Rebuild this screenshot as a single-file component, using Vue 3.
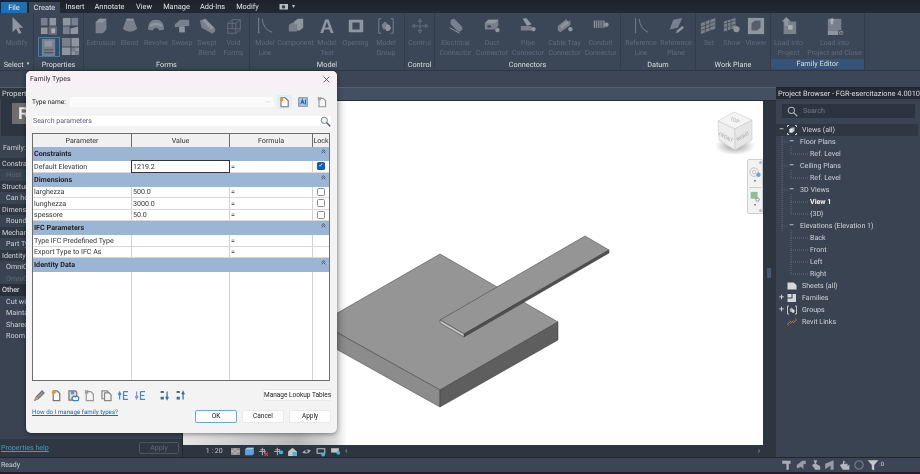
<script setup>
import { h } from 'vue'

const G = '#78808d', L = '#8e96a2', D = '#636b78', S = '#aab0b9'
const icons = {
  modify: [['M5 0L5 17L9 13L12 19L15 17.5L12 12L17 12Z', L]],
  extrusion: [['M4 6L8 2H16V14L12 18H4Z', G], ['M4 6L8 2H16L12 6Z', L]],
  blend: [['M6 2H14L18 13Q10 20 2 13Z', G], ['M6 2H14L13 4H7Z', L]],
  revolve: [['M1 14Q1 3 10 3Q19 3 19 14L14 15Q10 9 6 15Z', G], ['M3 9Q10 4 17 9L16 11Q10 7 4 11Z', L]],
  sweep: [['M2 8L8 3H18V10L13 10V17H7V11H2Z', G], ['M7 11H13V17H7Z', L]],
  swept: [['M2 4L8 2L18 12A3 3 0 1 1 13 17L4 12Z', G], ['M8 2L18 12L14 14L5 4Z', L]],
  void: [['M3 7L8 3H17V14L12 18H3ZM3 7H12V18M12 7L17 3M8 3V13H3M8 13H17', 'none', D]],
  mline: [['M3 1V18M7 2Q8 14 18 17', 'none', G], ['M2 2h2M2 17h2', 'none', G]],
  component: [['M2 9L6 6H11V16H2Z', G], ['M8 5L12 2H18V12L14 15H11V8H8Z', L]],
  mtext: [['T', 'A']],
  opening: [['M2 3H18V17H2ZM6 6V14H14V6Z', L]],
  mgroup: [['M5 2H2V18H5M15 2H18V18H15', 'none', G], ['M5 9L9 5L12 8V14H7Z', G], ['M10 9A3.5 3.5 0 1 1 10 15Z', L]],
  control: [['M10 4V16M3 10H17M10 2L8 5H12ZM10 18L8 15H12ZM1 10L4 8V12ZM19 10L16 8V12Z', 'none', D]],
  elec: [['M4 3L8 2L16 10A3 3 0 0 1 11 15L4 8Z', G], ['M3 12L14 18', 'none', L]],
  duct: [['M2 7L6 3H17V10L13 14H2Z', G], ['M2 7H13L17 3H6Z', L], ['M5 9H9V12H5Z', '#4a5260'], ['M16 12a2.5 2.5 0 1 0 .01 0', L]],
  pipe: [['M4 2L8 1L14 8L9 10Z', L], ['M2 10H14V15H2Z', G], ['M16 11a2.5 2.5 0 1 0 .01 0', L]],
  tray: [['M2 10L12 2V6L16 3V9L5 17L2 15Z', G], ['M5 10L13 4L14 7L6 13Z', L], ['M16 11a2.5 2.5 0 1 0 .01 0', L]],
  conduit: [['M2 4H14V12H2Z', L], ['M4 4V12M6 4V12M8 4V12M10 4V12M12 4V12', 'none', '#4a5260'], ['M16 6a2.5 2.5 0 1 0 .01 0', L]],
  rline: [['M4 1V18', 'none', G], ['M8 2Q9 13 18 17', 'none', G]],
  rplane: [['M7 3L17 1L12 12L3 14Z', G], ['M11 15L17 10L19 12L13 17L10 18Z', L]],
  wset: [['M1 7L17 1V13L1 19Z', G], ['M6 5V17M11 3V15M1 11L17 5M1 15L17 9', 'none', '#4a5260']],
  show: [['M1 5L14 1V12L1 16Z', G], ['M5 4V15M9 3V14M1 8L14 4M1 12L14 8', 'none', '#4a5260'], ['M15 10a3.5 3.5 0 1 0 .01 0', L]],
  viewer: [['M1 1H19V19H1Z', L], ['M5 7L9 4H15V12L11 15H5Z', '#575f6c']],
  load: [['M4 5H18V19H4Z', G], ['M9 9H14V14H9Z', S], ['M7 0L12 5H9V10H5V5H2Z', L]],
  loadc: [['M2 2H17V15H2Z', G], ['M2 15H19V20H2Z', L], ['M7 1L10 4H8V8H5V4H3Z', S], ['M14 15H20V20H14ZM15 16L19 19M19 16L15 19', 'none', '#4a5260']],
  p1: [['M2 1H9V9H2Z', G], ['M11 1H18V9H11Z', L], ['M2 11H9V18H2Z', L], ['M10 10H19V19H10Z', D], ['M13 12H17V17H13Z', S]],
  p2: [['M2 1H10V9H2Z', L], ['M11 1H18V9H11Z', G], ['M2 10H9V18H2Z', G], ['M10 12L18 10V18H10Z', L]],
  p3: [['M3 1H17V19H3Z', G], ['M6 3H14V9H6Z', L], ['M5 12H15V13H5ZM5 15H15V16H5Z', '#3f4755']],
  p4: [['M1 1H10V10H1Z', G], ['M11 1H19V10H11Z', L], ['M1 11H10V19H1Z', L], ['M11 11H15V15H11ZM15 15H19V19H15Z', G], ['M15 11H19V15H15ZM11 15H15V19H11Z', L]],
  dNew: [['M5 3H12L17 8V18H5Z', '#fff', '#777'], ['M6 3a3 3 0 1 0 .01 0', '#f0922d']],
  dRen: [['M3 3H17V17H3Z', '#bcd3ea', '#6d8eb0'], ['M6 14L9 6L12 14M8 11H11M14 6V14', 'none', '#2c6aa5']],
  dDel: [['M5 4H12L16 8V18H5Z', '#f4f4f4', '#999'], ['M3 2L8 7M8 2L3 7', 'none', '#999']],
  pencil: [['M3 17L5 12L14 3L17 6L8 15Z', '#9a9a9a', '#777'], ['M3 17L5 12L8 15Z', '#d6a85e']],
  dDoc: [['M5 3H11L15 7V18H5Z', '#fff', '#777'], ['M6 2a3 3 0 1 0 .01 0', '#f0922d']],
  dCloud: [['M3 3H13L15 5V17H3Z', '#ddd', '#777'], ['M6 3H11V8H6Z', '#6d8eb0'], ['M9 17A3 3 0 0 1 13 12A3 3 0 0 1 18 15Q18 18 16 18H10Z', '#fff', '#3c7fc2']],
  dCopy: [['M3 3H11L14 6V15H3Z', '#f3f3f3', '#888'], ['M7 6H14L17 9V18H7Z', '#f3f3f3', '#888']],
  up: [['M4 16V7M2 9L4 5L6 9', 'none', '#4a8ac4'], ['M10 4V16H17M10 4H17M10 10H16', 'none', '#4a8ac4']],
  down: [['M4 4V13M2 11L4 15L6 11', 'none', '#8a94cf'], ['M10 4V16H17M10 4H17M10 10H16', 'none', '#4a8ac4']],
  az: [['M4 3H9V6H4ZM4 12H9V16H4Z', '#3d6f9d'], ['M14 4V15M12 12L14 16L16 12', 'none', '#3d6f9d']],
  za: [['M4 3H9V6H4ZM4 12H9V16H4Z', '#3d6f9d'], ['M14 16V5M12 8L14 4L16 8', 'none', '#3d6f9d']],
  vDetail: [['M2 4H18V16H2Z', '#b5b5b5'], ['M2 4H7V8H2ZM12 4H18V8H12ZM7 8H12V12H7ZM2 12H7V16H2ZM12 12H18V16H12Z', '#8c8c8c']],
  vStyle: [['M2 6L6 3H18V14L15 17H2Z', '#5da3dc'], ['M2 6H15L18 3H6Z', '#a9d1ef']],
  vSun: [['M2 10H14M8 3V17M4 7H12V14', 'none', '#a6acb5'], ['M12 12L18 18M18 12L12 18', 'none', '#e04444']],
  vShadow: [['M2 10H14M8 3V17M4 7H12V14', 'none', '#a6acb5'], ['M15 8a3.5 3.5 0 1 0 .01 0', '#39bcd0']],
  vHouse: [['M2 10L10 3L18 10V18H2Z', '#c0c5cb'], ['M10 11H18V18H10Z', '#39bcd0']],
  vEye: [['M2 12Q10 3 18 8Q12 17 2 12Z', '#a6acb5'], ['M10 7a2.5 2.5 0 1 0 .01 0', '#3c4453']],
  vCrop: [['M2 5H16V13H2Z', 'none', '#c0c5cb'], ['M13 12a3.5 3.5 0 1 0 .01 0', '#39bcd0']],
  vCrop2: [['M2 4H16V12H2Z', '#c0c5cb'], ['M15 9a3.5 3.5 0 1 0 .01 0', '#39bcd0']],
  s1: [['M2 3H16V8H13V18H9V8H2Z', '#a9afb8']],
  s2: [['M3 10L12 3H18V8L14 9V17L10 13L3 16Z', '#969da8']],
  s3: [['M6 2H12L10 8L17 12V18H9L3 10L8 8Z', '#a9afb8']],
  s4: [['M2 8L16 2V18H11V11L2 17Z', '#969da8']],
  s5: [['M9 2L13 6H10V8H16V12L19 9V18H8L3 10L8 8Z', '#b2b8c0']],
  s6: [['M10 3a7 7 0 1 0 .01 0', 'none', '#737b88']],
  filter: [['M1 2H19L12 10V19L8 17V10Z', '#c4c9cf']],
  tViews: [['M1 1V4M1 1H4M19 1V4M19 1H16M1 19V16M1 19H4M19 19V16M19 19H16', 'none', '#d4d8dd'], ['M5 8L9 5H15V12L11 15H5Z', '#b9bfc7'], ['M5 8H11V15H5Z', '#e6e8eb']],
  tSheets: [['M1 3H13L19 8V17H1Z', '#d4d8dd']],
  tFam: [['M1 2H9V9H1ZM11 2H18V18H1V11H11Z', '#d4d8dd']],
  tGroups: [['M4 2H1V18H4M16 2H19V18H16', 'none', '#c8ccd2'], ['M5 9L9 5L12 8V14H7Z', '#aeb4bd'], ['M10 9A3.5 3.5 0 1 1 10 15Z', '#d4d8dd']],
  tLinks: [['M3 17A3 3 0 0 1 3 12L8 8M17 3A3 3 0 0 1 17 8L12 12M7 13L13 7', 'none', '#c0824a']],
  cam: [['M1 4H18V15H1Z', '#b9bfc7'], ['M9 6a3.5 3.5 0 1 0 .01 0', '#3b4453']]
}

// Functional helper so every small icon is drawn from the table above
const Ic = (props) =>
  h('svg', { viewBox: '0 0 20 20', width: props.size, height: props.size, style: { flex: 'none', display: 'block' } },
    icons[props.name].map((s) =>
      s[0] === 'T'
        ? h('text', { x: 10, y: 17.5, 'text-anchor': 'middle', 'font-size': 22, 'font-weight': 700, 'font-family': 'Liberation Sans, sans-serif', fill: L }, s[1])
        : h('path', { d: s[0], fill: s[1], stroke: s[2] || 'none', 'stroke-width': s[2] ? (props.size > 14 ? 1.1 : 1.9) : 0 })
    ))
Ic.props = ['name', 'size']

const tabs = [
  { t: 'Create', w: 31 }, { t: 'Insert', w: 30 }, { t: 'Annotate', w: 39 }, { t: 'View', w: 30 },
  { t: 'Manage', w: 35 }, { t: 'Add-Ins', w: 37 }, { t: 'Modify', w: 33 }
]

const panels = [
  { label: 'Select', w: 34, menu: true, tools: [{ lines: ['Modify'], icon: 'modify', w: 34 }] },
  { label: 'Properties', w: 50, grid: true, tools: [] },
  { label: 'Forms', w: 166, tools: [
    { lines: ['Extrusion'], icon: 'extrusion', w: 31 }, { lines: ['Blend'], icon: 'blend', w: 26 },
    { lines: ['Revolve'], icon: 'revolve', w: 27 }, { lines: ['Sweep'], icon: 'sweep', w: 25 },
    { lines: ['Swept', 'Blend'], icon: 'swept', w: 25 }, { lines: ['Void', 'Forms'], icon: 'void', w: 28 }] },
  { label: 'Model', w: 155, tools: [
    { lines: ['Model', 'Line'], icon: 'mline', w: 28 }, { lines: ['Component'], icon: 'component', w: 33 },
    { lines: ['Model', 'Text'], icon: 'mtext', w: 30 }, { lines: ['Opening'], icon: 'opening', w: 27 },
    { lines: ['Model', 'Group'], icon: 'mgroup', w: 34 }] },
  { label: 'Control', w: 30, tools: [{ lines: ['Control'], icon: 'control', w: 28 }] },
  { label: 'Connectors', w: 186, tools: [
    { lines: ['Electrical', 'Connector'], icon: 'elec', w: 38 }, { lines: ['Duct', 'Connector'], icon: 'duct', w: 35 },
    { lines: ['Pipe', 'Connector'], icon: 'pipe', w: 37 }, { lines: ['Cable Tray', 'Connector'], icon: 'tray', w: 36 },
    { lines: ['Conduit', 'Connector'], icon: 'conduit', w: 36 }] },
  { label: 'Datum', w: 75, tools: [
    { lines: ['Reference', 'Line'], icon: 'rline', w: 36 }, { lines: ['Reference', 'Plane'], icon: 'rplane', w: 34 }] },
  { label: 'Work Plane', w: 75, tools: [
    { lines: ['Set'], icon: 'wset', w: 22 }, { lines: ['Show'], icon: 'show', w: 24 }, { lines: ['Viewer'], icon: 'viewer', w: 24 }] },
  { label: 'Family Editor', w: 94, active: true, tools: [
    { lines: ['Load into', 'Project'], icon: 'load', w: 34 }, { lines: ['Load into', 'Project and Close'], icon: 'loadc', w: 58 }] }
]

const propRows = [
  { t: 'Constraints', h: 1 }, { t: 'Host', off: 1 }, { t: 'Structural', h: 1 }, { t: 'Can host rebar' },
  { t: 'Dimensions', h: 1 }, { t: 'Round Connector' }, { t: 'Mechanical', h: 1 }, { t: 'Part Type' },
  { t: 'Identity Data', h: 1 }, { t: 'OmniClass' }, { t: 'OmniClass', off: 1 }, { t: 'Other', h: 1, hot: 1 },
  { t: 'Cut with' }, { t: 'Maintain' }, { t: 'Shared' }, { t: 'Room' }
]

const tree = [
  { t: 'Views (all)', lv: 0, exp: '−', icon: 'tViews', sel: 1 }, { t: 'Floor Plans', lv: 1, exp: '−' }, { t: 'Ref. Level', lv: 2 },
  { t: 'Ceiling Plans', lv: 1, exp: '−' }, { t: 'Ref. Level', lv: 2 }, { t: '3D Views', lv: 1, exp: '−' },
  { t: 'View 1', lv: 2, bold: 1 }, { t: '{3D}', lv: 2 }, { t: 'Elevations (Elevation 1)', lv: 1, exp: '−' },
  { t: 'Back', lv: 2 }, { t: 'Front', lv: 2 }, { t: 'Left', lv: 2 }, { t: 'Right', lv: 2 },
  { t: 'Sheets (all)', lv: 0, icon: 'tSheets' }, { t: 'Families', lv: 0, exp: '+', icon: 'tFam' },
  { t: 'Groups', lv: 0, exp: '+', icon: 'tGroups' }, { t: 'Revit Links', lv: 0, icon: 'tLinks' }
]

const paramGroups = [
  { name: 'Constraints', rows: [{ p: 'Default Elevation', v: '1219.2', f: '=', lock: 'on', focus: 1 }] },
  { name: 'Dimensions', rows: [
    { p: 'larghezza', v: '500.0', f: '=', lock: 'off' }, { p: 'lunghezza', v: '3000.0', f: '=', lock: 'off' },
    { p: 'spessore', v: '50.0', f: '=', lock: 'off' }] },
  { name: 'IFC Parameters', rows: [
    { p: 'Type IFC Predefined Type', v: '', f: '=' }, { p: 'Export Type to IFC As', v: '', f: '=' }] },
  { name: 'Identity Data', rows: [] }
]

const viewIcons = ['vDetail', 'vStyle', 'vSun', 'vShadow', 'vHouse', 'vEye', 'vCrop', 'vCrop2']
const statusIcons = ['s1', 's2', 's3', 's4', 's5', 's6']
const dlgTools = ['pencil', 'dDoc', 'dCloud', 'dDel', 'dCopy', 'up', 'down', 'az', 'za']
</script>

<template>
  <div class="app">
    <div class="tabs">
      <span class="file">File</span>
      <span v-for="(t, i) in tabs" :key="t.t" class="tab" :class="{ on: i === 0 }" :style="{ width: t.w + 'px' }">{{ t.t }}</span>
      <span class="cam"><Ic name="cam" :size="10" /><i>▾</i></span>
    </div>

    <div class="ribbon">
      <section v-for="p in panels" :key="p.label" class="panel" :style="{ width: p.w + 'px' }">
        <div class="tools">
          <div v-if="p.grid" class="pgrid">
            <Ic name="p1" :size="19" /><Ic name="p2" :size="19" />
            <span class="psel"><Ic name="p3" :size="19" /></span><Ic name="p4" :size="19" />
          </div>
          <div v-for="t in p.tools" :key="t.lines.join()" class="tool" :style="{ width: t.w + 'px' }">
            <Ic :name="t.icon" :size="18" />
            <span v-for="l in t.lines" :key="l" class="tl">{{ l }}</span>
          </div>
        </div>
        <div class="plabel" :class="{ active: p.active }">{{ p.label }}<i v-if="p.menu">▾</i></div>
      </section>
    </div>
    <div class="band"></div>

    <div class="main">
      <aside class="props">
        <div class="ptitle">Properties</div>
        <div class="thumb"><span class="logo">R</span></div>
        <div class="famrow">Family:</div>
        <div class="plist">
          <div v-for="(r, i) in propRows" :key="i" class="prow" :class="{ head: r.h, off: r.off, hot: r.hot }">{{ r.t }}</div>
        </div>
        <div class="pfoot"><a class="phelp">Properties help</a><span class="papply">Apply</span></div>
      </aside>

      <div class="center">
        <div class="vtop"></div>
        <div class="vmid">
          <div class="viewport">
            <svg class="scene" viewBox="183 101 580 344" width="580" height="344">
              <defs>
                <linearGradient id="shade" x1="183" x2="347" y1="0" y2="0" gradientUnits="userSpaceOnUse">
                  <stop offset="0" stop-color="#000" stop-opacity=".1" />
                  <stop offset=".7" stop-color="#000" stop-opacity=".28" />
                  <stop offset=".93" stop-color="#000" stop-opacity=".14" />
                  <stop offset="1" stop-color="#000" stop-opacity="0" />
                </linearGradient>
                <radialGradient id="cubeShadow">
                  <stop offset="0" stop-color="#999" />
                  <stop offset="1" stop-color="#fff" />
                </radialGradient>
              </defs>
              <g stroke="#3a3a3a" stroke-width=".5" stroke-linejoin="round">
                <polygon points="320,323 440,254 558,322 440,390" fill="#959595" />
                <polygon points="320,323 440,390 440,407 320,340" fill="#8c8c8c" />
                <polygon points="440,390 558,322 558,340 440,407" fill="#5e5e5e" />
                <polygon points="440,320 585,236 609,250 464,334" fill="#959595" />
                <polygon points="464,334 609,250 609,253 464,337" fill="#4f4f4f" />
                <polygon points="440,320 464,334 464,337 440,323" fill="#c4c4c4" />
              </g>
              <rect x="183" y="101" width="165" height="344" fill="url(#shade)" />
              <ellipse cx="735" cy="146" rx="20" ry="9" fill="url(#cubeShadow)" />
              <g stroke="#c9c9c9" stroke-width=".6">
                <polygon points="734,112 752,120 735,129 718,121" fill="#f4f4f4" />
                <polygon points="718,121 735,129 735,150 719,140" fill="#eeeeee" />
                <polygon points="752,120 735,129 735,150 752,140" fill="#e6e6e6" />
              </g>
              <g class="cubetxt">
                <text x="735" y="122" transform="rotate(22 735 120)">TOP</text>
                <text x="726" y="139" transform="rotate(28 726 137)">FRONT</text>
                <text x="743" y="138" transform="rotate(-30 743 136)">RIGHT</text>
              </g>
            </svg>
            <div class="navbar">
              <i class="nx"></i>
              <svg viewBox="0 0 16 14" width="14" height="12"><circle cx="7" cy="6" r="5" fill="none" stroke="#bbb" /><circle cx="7" cy="6" r="2" fill="none" stroke="#bbb" /><circle cx="12" cy="9" r="2.6" fill="#6aa5dc" /></svg>
              <b>▾</b><hr />
              <svg viewBox="0 0 16 14" width="14" height="12"><rect x="3" y="1" width="8" height="8" fill="#8fc08f" /><circle cx="11" cy="10" r="2" fill="none" stroke="#888" /></svg>
              <b>▾</b>
              <i class="nx"></i>
            </div>
          </div>
          <div class="vscroll"><i></i></div>
        </div>
        <div class="vbar">
          <span class="scale">1 : 20</span>
          <span class="vicons"><Ic v-for="n in viewIcons" :key="n" :name="n" :size="11" /></span>
          <span class="chev">‹</span>
          <span class="hs"></span>
          <span class="chev">›</span>
          <i class="vgrip"></i>
        </div>
      </div>

      <aside class="browser">
        <div class="btitle">Project Browser - FGR-esercitazione 4.0010</div>
        <div class="bsearch">
          <svg viewBox="0 0 14 14" width="11" height="11"><circle cx="5.5" cy="5.5" r="4" fill="none" stroke="#aeb4bd" stroke-width="1.3" /><path d="M8.5 8.5L13 13" stroke="#aeb4bd" stroke-width="1.5" /></svg>
          <span>Search</span>
        </div>
        <div class="tree">
          <svg class="tlines" width="40" height="290" viewBox="0 0 40 290">
            <path d="M6 10V108M6 18H12M6 42H12M6 66H12M6 102H12M15 22V30H32M15 46V54H32M15 70V90H32M15 78H32M15 106V150H32M15 114H32M15 126H32M15 138H32" fill="none" stroke="#616b79" stroke-dasharray="1 1" />
          </svg>
          <div v-for="(r, i) in tree" :key="i" class="trow" :class="['lv' + r.lv, { sel: r.sel, bold: r.bold }]">
            <span v-if="r.lv < 2" class="exp">{{ r.exp }}</span>
            <span v-if="r.icon" class="ticon"><Ic :name="r.icon" :size="10" /></span>
            <span class="ttext">{{ r.t }}</span>
          </div>
        </div>
      </aside>
    </div>

    <footer class="status">
      <span class="ready">Ready</span>
      <span class="sicons">
        <Ic v-for="n in statusIcons" :key="n" :name="n" :size="12" />
        <Ic name="filter" :size="12" /><em>:0</em>
      </span>
    </footer>
    <div class="redline"></div>

    <div class="dialog">
      <header class="dhead"><span>Family Types</span>
        <svg viewBox="0 0 10 10" width="7" height="7"><path d="M1 1L9 9M9 1L1 9" stroke="#333" stroke-width="1.1" /></svg>
      </header>
      <div class="dbody">
        <div class="typerow">
          <label>Type name:</label>
          <div class="tsel"><span>⌵</span></div>
          <span class="tbtn hot"><Ic name="dNew" :size="12" /></span>
          <span class="tbtn"><Ic name="dRen" :size="12" /></span>
          <span class="tbtn"><Ic name="dDel" :size="12" /></span>
        </div>
        <div class="dsearch"><span>Search parameters</span>
          <svg viewBox="0 0 14 14" width="11" height="11"><circle cx="5.5" cy="5.5" r="4" fill="#e9f2f8" stroke="#666" /><path d="M8.5 8.5L13 13" stroke="#555" stroke-width="1.8" /></svg>
        </div>
        <div class="ptable">
          <div class="tr th"><span>Parameter</span><span>Value</span><span>Formula</span><span>Lock</span></div>
          <template v-for="g in paramGroups" :key="g.name">
            <div class="sect"><b>{{ g.name }}</b>
              <svg viewBox="0 0 8 8" width="5" height="5"><path d="M1 4L4 1L7 4M1 7L4 4L7 7" fill="none" stroke="#333" stroke-width="1.1" /></svg>
            </div>
            <div v-for="r in g.rows" :key="r.p" class="tr td">
              <span>{{ r.p }}</span>
              <span :class="{ focus: r.focus }">{{ r.v }}</span>
              <span>{{ r.f }}</span>
              <span class="lock"><i v-if="r.lock" class="cb" :class="r.lock">{{ r.lock === 'on' ? '✓' : '' }}</i></span>
            </div>
          </template>
          <div class="tr empty"><span></span><span></span><span></span><span></span></div>
        </div>
        <div class="dtools">
          <span class="dic"><span v-for="n in dlgTools" :key="n" class="dicon" :class="n"><Ic :name="n" :size="13" /></span></span>
          <button class="lookup">Manage Lookup Tables</button>
        </div>
        <div class="dfoot">
          <a>How do I manage family types?</a>
          <button class="btn def">OK</button>
          <button class="btn">Cancel</button>
          <button class="btn">Apply</button>
        </div>
      </div>
      <i class="grip"></i>
    </div>
  </div>
</template>

<style>
html, body { margin: 0; background: #3b4453; }
</style>

<style scoped>
.app { position: relative; width: 920px; height: 474px; overflow: hidden; background: #3b4453; color: #d5d9de; font: 7.2px/1 Roboto, "Open Sans", sans-serif; text-rendering: geometricPrecision; display: flex; flex-direction: column; filter: blur(.3px); }
.app i, .app em, .app b { font-style: normal; }

.tabs { height: 13px; background: linear-gradient(#1c222b, #242a35); display: flex; align-items: stretch; padding-left: 1px; font-size: 7.4px; color: #dfe2e6; }
.file { width: 26px; margin: 2px 2px 0 0; background: #1c70b4; color: #e6f0f8; display: flex; align-items: center; justify-content: center; }
.tab { display: flex; align-items: center; justify-content: center; flex: none; }
.tab.on { background: #3b4656; margin-top: 2px; }
.cam { display: flex; align-items: center; gap: 3px; margin-left: 15px; font-size: 6px; color: #b9bfc7; }

.ribbon { height: 58px; background: #3b4656; display: flex; border-bottom: 1px solid #2e3643; box-sizing: border-box; }
.panel { flex: none; box-sizing: border-box; border-right: 1px solid #333c4a; display: flex; flex-direction: column; height: 100%; }
.tools { height: 46px; padding: 4px 0 0; display: flex; justify-content: center; box-sizing: border-box; }
.pgrid { display: grid; grid-template-columns: 22px 19px; gap: 1px 1px; align-content: start; justify-items: center; }
.psel { width: 22px; height: 20px; box-sizing: border-box; border: 1px solid #3f7fa8; background: #33506a; display: flex; align-items: center; justify-content: center; }
.tool { display: flex; flex-direction: column; align-items: center; color: #626b78; font-size: 7px; flex: none; }
.tool svg { margin-bottom: 4px; }
.tl { height: 9.5px; line-height: 9.5px; white-space: nowrap; }
.plabel { flex: 1; display: flex; align-items: center; justify-content: center; gap: 3px; color: #d9dde1; font-size: 7.3px; }
.plabel i { font-size: 5px; }
.plabel.active { background: #365479; margin-bottom: 1px; }

.band { height: 16px; background: #3d4656; border-bottom: 1px solid #56616f; }

.main { height: 369px; display: flex; background: #2f3743; }
.props { width: 183px; flex: none; box-sizing: border-box; background: #3a4352; border-right: 1px solid #20262f; display: flex; flex-direction: column; }
.ptitle { height: 10px; background: #2f3743; padding: 1px 0 0 2px; line-height: 9px; font-size: 7.4px; }
.thumb { height: 33px; margin: 0 0 0 1px; background: #2d3542; padding: 4px 0 0 11px; }
.logo { display: block; width: 30px; height: 21px; background: linear-gradient(90deg, #6c6c6c, #7d7d7d); color: #e8e8e8; font: 700 17px/21px "Liberation Sans", sans-serif; padding-left: 6px; }
.famrow { height: 15px; display: flex; align-items: center; padding-left: 3px; margin-top: 4px; color: #ccd0d6; font-size: 7.2px; }
.plist { flex: 1; padding-top: 3px; }
.prow { height: 11.47px; line-height: 11.47px; padding-left: 6px; white-space: nowrap; font-size: 7.2px; color: #cfd3d9; }
.prow.head { background: #2f3743; padding-left: 2px; }
.prow.off { color: #616a77; }
.prow.hot { background: #28303c; color: #eef0f2; }
.pfoot { height: 18px; display: flex; align-items: center; justify-content: space-between; padding: 0 3px 0 1px; background: #2f3743; }
.phelp { color: #3d9fc2; text-decoration: underline; font-size: 7.1px; }
.papply { width: 40px; height: 12px; box-sizing: border-box; border: 1px solid #4a5462; border-radius: 2px; color: #626b78; display: flex; align-items: center; justify-content: center; font-size: 7.1px; }

.center { width: 593px; flex: none; display: flex; flex-direction: column; }
.vtop { height: 13px; background: #454f62; border-bottom: 1px solid #262d38; box-sizing: border-box; }
.vmid { height: 344px; display: flex; }
.viewport { width: 580px; position: relative; background: #fff; }
.scene { display: block; }
.cubetxt text { font: 5px Roboto, sans-serif; fill: #a8a8a8; text-anchor: middle; }
.navbar { position: absolute; left: 564px; top: 58px; width: 16px; height: 55px; box-sizing: border-box; background: #f2f2f2; border: 1px solid #cfcfcf; border-radius: 2px 0 0 2px; display: flex; flex-direction: column; align-items: center; padding: 1px 0; }
.navbar .nx { width: 3px; height: 3px; border-radius: 50%; background: #bbb; align-self: flex-end; }
.navbar b { font-size: 4px; color: #777; height: 6px; }
.navbar hr { width: 12px; margin: 2px 0 3px; border: 0; border-top: 1px solid #ccc; }
.navbar svg:first-of-type { margin-top: 3px; }
.navbar .nx:last-child { margin-top: auto; }
.vscroll { width: 13px; background: #2d3541; position: relative; }
.vscroll i { position: absolute; left: 4px; top: 167px; width: 4px; height: 10px; background: #48586c; }
.vbar { height: 12px; background: #2d3541; display: flex; align-items: center; color: #c3c7cd; font-size: 7px; }
.scale { margin-left: 16px; width: 30.5px; text-align: center; }
.vicons { display: flex; gap: 3.4px; }
.chev { width: 10px; text-align: center; color: #9aa2ad; font-size: 8px; }
.hs { flex: 1; }
.vgrip { width: 6px; height: 6px; margin: 0 3px 0 3px; background: radial-gradient(circle, #6b7482 30%, transparent 35%) 0 0 / 2px 2px; }

.browser { flex: 1; background: #3a4352; display: flex; flex-direction: column; border-top: 1px solid #1d232c; margin-top: -1px; }
.btitle { height: 11px; background: #232a34; padding-left: 2px; line-height: 11px; font-size: 7.4px; white-space: nowrap; color: #dadde1; }
.bsearch { height: 14px; margin: 5px 5px 0 6px; background: #2c3440; display: flex; align-items: center; gap: 5px; padding-left: 5px; color: #737c89; font-size: 7.1px; }
.tree { position: relative; margin-top: 6px; }
.tlines { position: absolute; left: 0; top: 0; pointer-events: none; }
.trow { position: relative; height: 12px; display: flex; align-items: center; white-space: nowrap; font-size: 7.1px; color: #cfd3d9; }
.trow.sel { background: #2f3743; margin-right: 2px; }
.trow.bold { font-weight: 700; color: #f4f5f6; }
.lv0 { padding-left: 3px; }
.lv1 { padding-left: 13px; }
.lv2 { padding-left: 34px; }
.exp { width: 8px; font-size: 9px; color: #dfe2e6; flex: none; }
.lv1 .exp { width: 11px; }
.ticon { width: 15px; flex: none; }

.status { height: 15px; background: #3b4555; border-top: 1px solid #20262f; box-sizing: border-box; display: flex; align-items: center; justify-content: space-between; padding: 0 36px 0 1px; }
.ready { font-size: 7px; color: #ced2d7; }
.sicons { display: flex; gap: 2.3px; align-items: center; }
.sicons em { margin-left: -2px; font-size: 6px; }
.redline { flex: 1; background: #2a1a22; }

.dialog { position: absolute; left: 26px; top: 71px; width: 311px; height: 362px; box-sizing: border-box; background: #f3f3f3; border-radius: 5px; box-shadow: 0 1px 5px rgba(0, 0, 0, .45); overflow: hidden; color: #222; font-size: 7.1px; }
.dhead { height: 17px; background: #f8f0f5; display: flex; align-items: center; justify-content: space-between; padding: 0 7px 0 4px; font-size: 7px; color: #333; }
.dbody { padding: 9px 6px 0; display: flex; flex-direction: column; }
.typerow { height: 10px; display: flex; align-items: center; }
.typerow label { width: 39px; font-size: 6.6px; white-space: nowrap; }
.tsel { width: 208px; height: 10px; background: #fbfbfb; margin-right: 2px; display: flex; justify-content: flex-end; align-items: center; padding-right: 4px; box-sizing: border-box; color: #aaa; font-size: 6px; }
.tbtn { width: 15px; height: 14px; margin: -2px 2px; display: flex; align-items: center; justify-content: center; }
.tbtn.hot { background: #e3eef7; margin-left: 1px; }
.dsearch { height: 10px; margin: 9px 0 0; background: #fff; display: flex; align-items: center; justify-content: space-between; color: #5f5a7a; font-size: 7px; padding-left: 1px; }
.ptable { margin-top: 7px; width: 298px; height: 248px; box-sizing: border-box; background: #fff; border: 1px solid #6e6e6e; display: flex; flex-direction: column; }
.tr { display: grid; grid-template-columns: 99px 98px 83px 16px; flex: none; }
.tr > span { box-sizing: border-box; border-right: 1px solid #d2d2d2; white-space: nowrap; }
.tr > span:last-child { border-right: 0; }
.th { height: 13px; background: #f0f0f0; }
.th > span { display: flex; align-items: center; justify-content: center; border-right: 1px solid #6e6e6e; font-size: 7.1px; color: #333; }
.sect { height: 14px; background: #9bb5d5; display: flex; align-items: center; justify-content: space-between; padding: 0 3px 0 1px; flex: none; font-size: 7.2px; }
.sect svg { margin-top: -5px; }
.td { height: 11.5px; border-bottom: 1px solid #d8d8d8; box-sizing: border-box; font-size: 7.1px; color: #333; }
.td > span { display: flex; align-items: center; padding-left: 1px; }
.td .focus { border: 1px solid #333; margin: -1px 0 -1px -1px; padding-left: 1px; background: #fff; }
.lock { justify-content: center; padding: 0 !important; }
.cb { display: block; width: 8px; height: 8px; border-radius: 1.5px; box-sizing: border-box; text-align: center; }
.cb.off { border: 1px solid #8c8c8c; background: #fff; }
.cb.on { background: #0c61b6; color: #fff; font-size: 6px; line-height: 8px; }
.empty { flex: 1; }
.dtools { height: 12px; margin-top: 8px; display: flex; align-items: center; justify-content: space-between; }
.dic { display: flex; align-items: center; padding-left: 1px; }
.dicon { width: 16.8px; }
.dicon.az { margin-left: 7px; }
button { font: inherit; color: #222; background: #fdfdfd; border: 1px solid #e9e9e9; border-radius: 2px; padding: 0; box-sizing: border-box; }
.lookup { width: 68px; height: 12px; font-size: 6.5px; white-space: nowrap; }
.dfoot { height: 13px; margin-top: 9px; display: flex; gap: 5px; align-items: flex-start; }
.dfoot a { flex: 1; color: #0f6cbd; text-decoration: underline; font-size: 6.2px; margin-top: -1px; }
.btn { width: 42px; height: 13px; font-size: 6.5px; }
.btn.def { border: 1px solid #6aa8d8; }
.grip { position: absolute; right: 1px; bottom: 1px; width: 6px; height: 6px; background: radial-gradient(circle, #aaa 30%, transparent 35%) 0 0 / 2px 2px; }
</style>
